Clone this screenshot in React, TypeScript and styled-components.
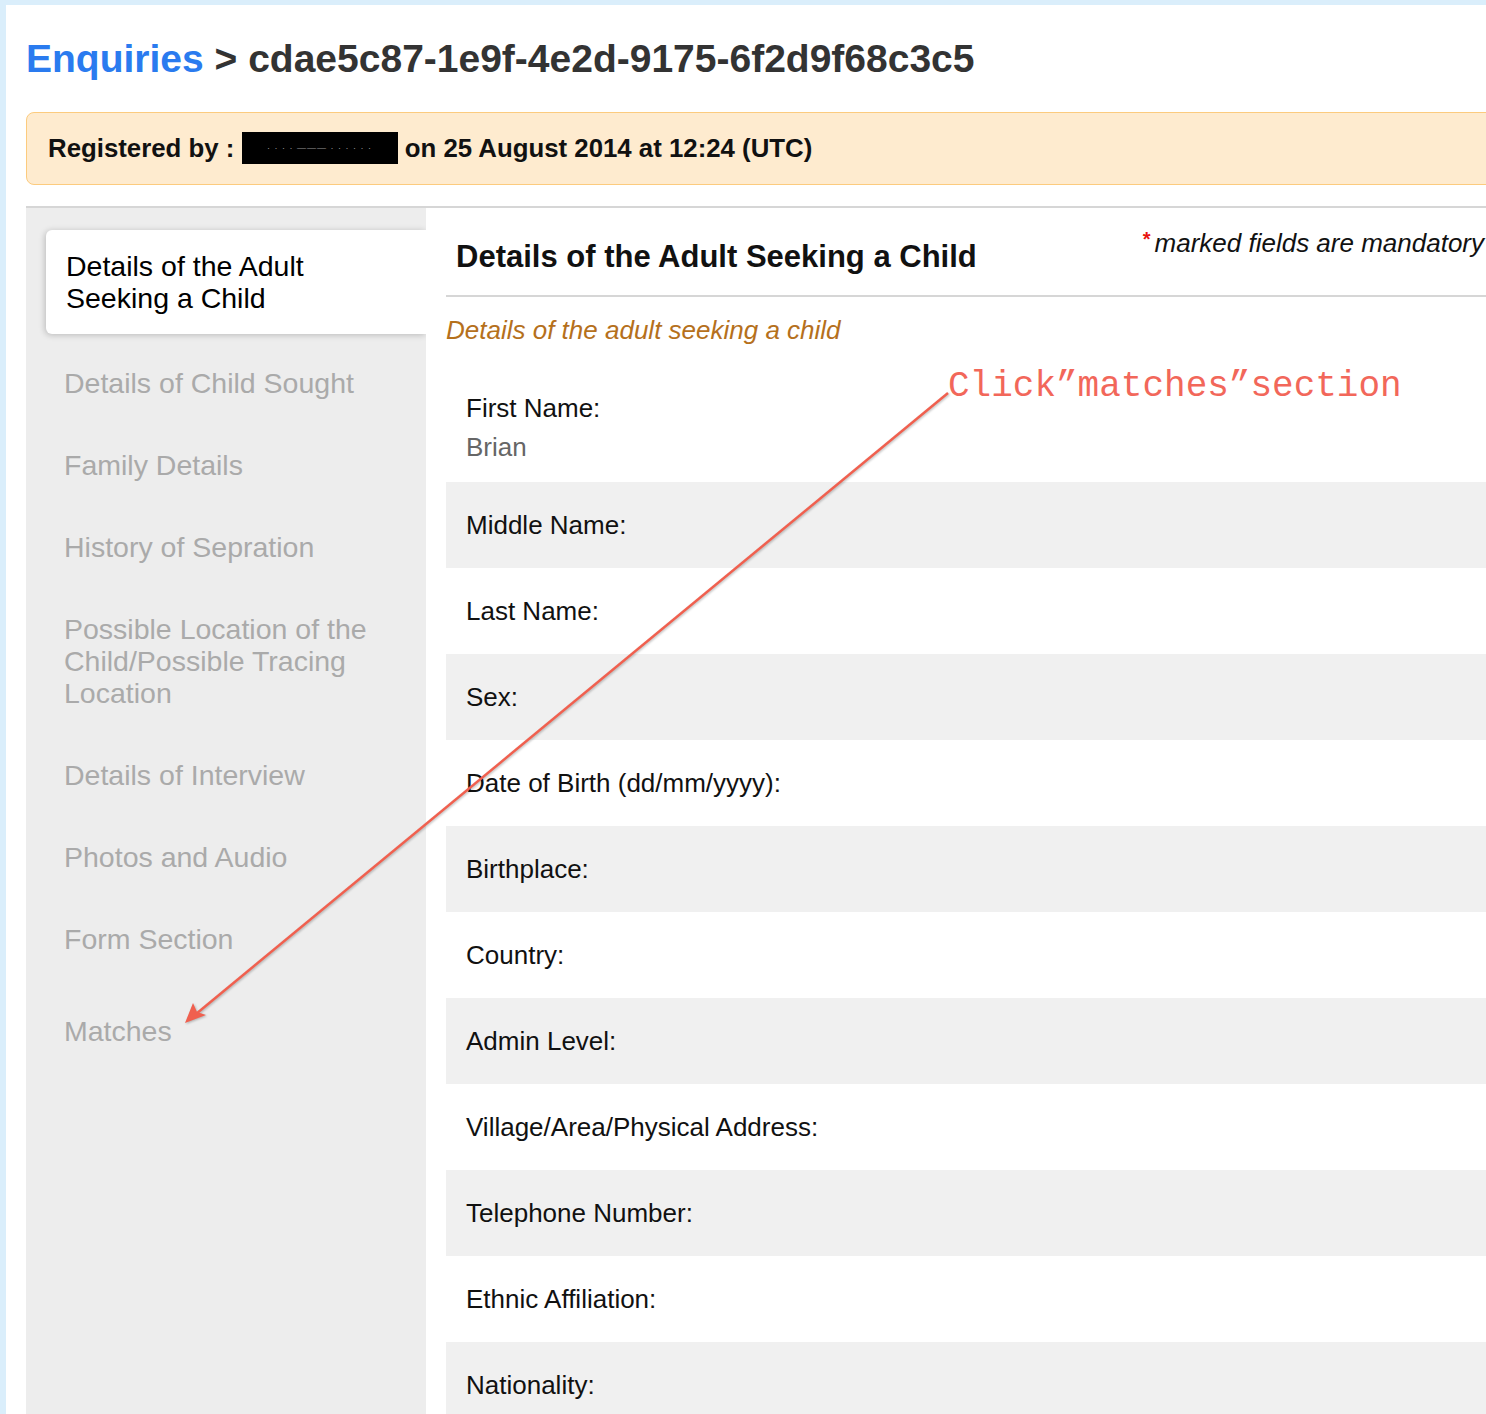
import styled, { createGlobalStyle } from 'styled-components';

const GlobalStyle = createGlobalStyle`
  html, body {
    margin: 0;
    padding: 0;
    overflow: hidden;
    background: #daeefb;
  }
  body {
    font-family: "Liberation Sans", Arial, Helvetica, sans-serif;
  }
`;

const Page = styled.div`
  position: relative;
  padding: 5px 0 0 6px;
  min-height: 1414px;
  box-sizing: border-box;
`;

const Sheet = styled.div`
  background: #fff;
  width: 1520px;
  min-height: 1409px;
  padding: 32px 20px 0;
  box-sizing: border-box;
`;

const Title = styled.h1`
  margin: 0;
  font-size: 39px;
  line-height: 44px;
  font-weight: bold;
  color: #333;
`;

const TitleLink = styled.a`
  color: #2a7bef;
  text-decoration: none;
`;

const Banner = styled.div`
  margin-top: 31px;
  background: #feebcf;
  border: 1px solid #fccb7e;
  border-radius: 8px;
  padding: 20px 21px;
  font-size: 25.8px;
  line-height: 30px;
  font-weight: bold;
  color: #111;
`;

const Redacted = styled.span`
  display: inline-flex;
  align-items: center;
  justify-content: center;
  vertical-align: top;
  margin-top: -1px;
  width: 156px;
  height: 32px;
  background: #000;
  color: #9a9a9a;
  font-size: 9px;
  font-weight: normal;
  letter-spacing: 1px;
`;

const Layout = styled.div`
  margin-top: 21px;
  border-top: 2px solid #d6d6d6;
  display: flex;
  align-items: stretch;
`;

const Sidebar = styled.nav`
  width: 400px;
  flex: none;
  background: #ededed;
  padding: 22px 0 0 20px;
  box-sizing: border-box;
  min-height: 1300px;
`;

const NavItem = styled.div<{ $active?: boolean; $spaced?: boolean }>`
  font-size: 28.5px;
  line-height: 32px;
  padding: 20px 24px 20px ${(p) => (p.$active ? '20px' : '18px')};
  margin-bottom: ${(p) => (p.$active ? '13px' : '10px')};
  margin-top: ${(p) => (p.$spaced ? '20px' : '0')};
  color: ${(p) => (p.$active ? '#000' : '#aaa')};
  background: ${(p) => (p.$active ? '#fff' : 'transparent')};
  border-radius: 6px 0 0 6px;
  box-shadow: ${(p) => (p.$active ? '-1px 1px 6px rgba(0, 0, 0, 0.22)' : 'none')};
  cursor: pointer;
`;

const Main = styled.main`
  flex: 1;
  padding-left: 20px;
  background: #fff;
`;

const Header = styled.div`
  display: flex;
  justify-content: space-between;
  align-items: flex-start;
  padding: 16px 22px 20px 10px;
  border-bottom: 2px solid #d6d6d6;
`;

const Heading = styled.h2`
  margin: 15px 0 0;
  font-size: 31px;
  line-height: 36px;
  font-weight: bold;
  color: #111;
`;

const Note = styled.div`
  font-size: 26px;
  line-height: 30px;
  font-style: italic;
  color: #111;
`;

const Star = styled.span`
  color: #e8140f;
  font-style: normal;
  font-weight: bold;
  font-size: 20px;
  vertical-align: 6px;
  margin-right: 4px;
`;

const SubHeading = styled.h3`
  margin: 18px 0 20px;
  font-size: 26px;
  line-height: 30px;
  font-style: italic;
  font-weight: normal;
  color: #b5701c;
`;

const FieldRow = styled.div<{ $shaded: boolean }>`
  padding: 27px 20px;
  background: ${(p) => (p.$shaded ? '#f0f0f0' : '#fff')};
  font-size: 26px;
  line-height: 32px;
  color: #111;
`;

const Value = styled.div`
  color: #666;
  margin-top: 7px;
  margin-bottom: -8px;
`;

const Overlay = styled.svg`
  position: absolute;
  top: 0;
  left: 0;
  pointer-events: none;
  filter: drop-shadow(1px 1px 1px rgba(0, 0, 0, 0.25));
`;

const Callout = styled.div`
  position: absolute;
  left: 948px;
  top: 367px;
  font-family: "Liberation Mono", "Courier New", monospace;
  font-size: 36px;
  line-height: 40px;
  color: #f2675a;
  white-space: nowrap;
`;

const navItems = [
  'Details of Child Sought',
  'Family Details',
  'History of Sepration',
  'Possible Location of the Child/Possible Tracing Location',
  'Details of Interview',
  'Photos and Audio',
  'Form Section',
];

const fields: { label: string; value?: string }[] = [
  { label: 'First Name:', value: 'Brian' },
  { label: 'Middle Name:' },
  { label: 'Last Name:' },
  { label: 'Sex:' },
  { label: 'Date of Birth (dd/mm/yyyy):' },
  { label: 'Birthplace:' },
  { label: 'Country:' },
  { label: 'Admin Level:' },
  { label: 'Village/Area/Physical Address:' },
  { label: 'Telephone Number:' },
  { label: 'Ethnic Affiliation:' },
  { label: 'Nationality:' },
];

export default function App() {
  return (
    <Page>
      <GlobalStyle />
      <Sheet>
        <Title>
          <TitleLink href="#">Enquiries</TitleLink> &gt; cdae5c87-1e9f-4e2d-9175-6f2d9f68c3c5
        </Title>

        <Banner>
          Registered by : <Redacted>· · · · ——— · · · · · ·</Redacted> on 25 August 2014 at 12:24 (UTC)
        </Banner>

        <Layout>
          <Sidebar>
            <NavItem $active>Details of the Adult Seeking a Child</NavItem>
            {navItems.map((item) => (
              <NavItem key={item}>{item}</NavItem>
            ))}
            <NavItem $spaced>Matches</NavItem>
          </Sidebar>

          <Main>
            <Header>
              <Heading>Details of the Adult Seeking a Child</Heading>
              <Note>
                <Star>*</Star>marked fields are mandatory
              </Note>
            </Header>
            <SubHeading>Details of the adult seeking a child</SubHeading>
            {fields.map((field, i) => (
              <FieldRow key={field.label} $shaded={i % 2 === 1}>
                {field.label}
                {field.value && <Value>{field.value}</Value>}
              </FieldRow>
            ))}
          </Main>
        </Layout>
      </Sheet>

      <Overlay width="1486" height="1414" viewBox="0 0 1486 1414">
        <line x1="948" y1="393" x2="196" y2="1014" stroke="#f0604f" strokeWidth="2.5" />
        <polygon points="185,1023 193,1003 197,1012 206,1015" fill="#f0604f" />
      </Overlay>
      <Callout>Click”matches”section</Callout>
    </Page>
  );
}
